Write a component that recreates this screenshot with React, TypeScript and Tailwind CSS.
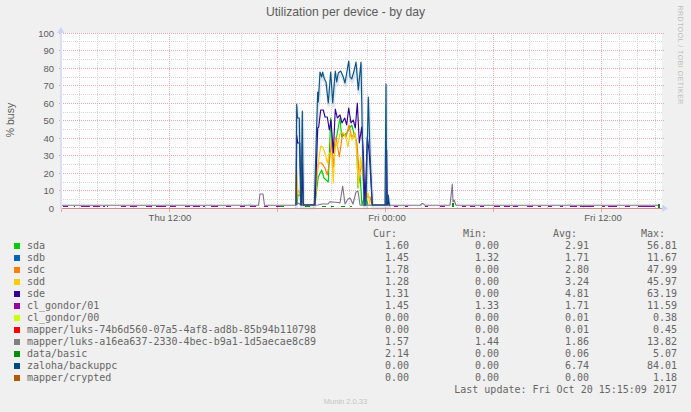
const mono = "font-['DejaVu_Sans_Mono',monospace]";

const rows: [string, string, string, string, string, string][] = [
  ["sda", "bg-[#00cc00]", "1.60", "0.00", "2.91", "56.81"],
  ["sdb", "bg-[#0066b3]", "1.45", "1.32", "1.71", "11.67"],
  ["sdc", "bg-[#ff8000]", "1.78", "0.00", "2.80", "47.99"],
  ["sdd", "bg-[#ffcc00]", "1.28", "0.00", "3.24", "45.97"],
  ["sde", "bg-[#330099]", "1.31", "0.00", "4.81", "63.19"],
  ["cl_gondor/01", "bg-[#990099]", "1.45", "1.33", "1.71", "11.59"],
  ["cl_gondor/00", "bg-[#ccff00]", "0.00", "0.00", "0.01", "0.38"],
  ["mapper/luks-74b6d560-07a5-4af8-ad8b-85b94b110798", "bg-[#ff0000]", "0.00", "0.00", "0.01", "0.45"],
  ["mapper/luks-a16ea637-2330-4bec-b9a1-1d5aecae8c89", "bg-[#808080]", "1.57", "1.44", "1.86", "13.82"],
  ["data/basic", "bg-[#008f00]", "2.14", "0.00", "0.06", "5.07"],
  ["zaloha/backuppc", "bg-[#00487d]", "0.00", "0.00", "6.74", "84.01"],
  ["mapper/crypted", "bg-[#b35a00]", "0.00", "0.00", "0.00", "1.18"],
];

const majorY = [33, 50, 68, 85, 103, 120, 138, 155, 173, 190];
const minorY = [41, 59, 77, 94, 112, 129, 147, 164, 182, 199];
const labelsY: [string, number][] = [
  ["100", 33], ["90", 50], ["80", 68], ["70", 85], ["60", 103], ["50", 120],
  ["40", 138], ["30", 155], ["20", 173], ["10", 190], ["0", 208],
];
const majorX = [61, 169, 277, 385, 493, 601];
const minorX = Array.from({ length: 34 }, (_, i) => 61 + i * 18).filter((x) => !majorX.includes(x));

const zaloha = "296,205 296.7,104 297.5,118 299.3,118 300.7,205 301,205 302.3,111 303.3,205 314.3,205 317.7,92 318.3,102 320,72 321.7,77 322.7,72 324,78 326,82 328.3,103 330.7,72 332.7,103 335.3,71 336.7,82 338.3,73 340.7,71 343.3,77 345,83 346.7,73 348.7,61 350,77 351.7,79 354,71 356,62 358.3,90 361,62 362.7,153 364,205 366,205 368.3,97 370,153 372.3,205 385,205 386,84 386.7,205 388.3,195 389.3,206";
const sde = "296,205 296.7,135 297.7,143 299.7,143 300.7,187 301.5,205 302.3,163 303.3,205 315,205 317.7,128 318.7,127 320.7,110 323.3,110 325,117 327.3,117 329.3,130 331,120 333.3,153 335.3,109 337.3,118 340,115 342,123 344.7,118 346.7,125 348.7,108 351,123 353.3,120 355.3,128 357.3,103 359.3,143 361.7,127 363.3,153 365,205 367.3,137 369.3,153 372.3,205 386,205 386.7,150 387.3,205 388.3,200 389.3,206";
const sdd = "296,205 296.7,170 298,193 300.7,193 303,205 315,205 316.7,180 318.3,163 320.7,146 322.7,147 325,153 327.3,163 329.3,153 331.7,153 333.3,183 335.3,140 337.3,147 340,133 343.3,133 346,138 348,147 350,133 352,140 355,133 356.7,153 358.3,187 360.7,157 363.3,180 365.7,200 368,193 370,205 386,205 386.7,195 388,205";
const sdc = "296.5,205 297.5,190 300,193 303,205 315,205 316,187 318.3,163 321.7,163 325,168 327.3,175 329.3,163 331.7,140 333.3,167 336,137 339.3,157 342.7,133 346,137 349,125 351.7,137 355,133 357.3,147 359.3,177 361.7,163 365,190 367.3,197 370,197 372,205";
const sda = "297,205 298,195 300,195 302,205 315,205 316,195 318.3,177 321.7,170 324,178 328.3,182 330.7,118 332.7,153 336,140 340,118 341.7,137 346.7,133 351.7,125 356.7,143 358,188 360,175 362,205 365,195 368,205";
const bumps = "61,205.2 258.5,205.2 260,194 263,194 264.5,205.2 296,205.2 298,203 301,205 314,205.2 318,205 322,204 328,204 330,201.7 333,202 338,202.5 340,203 342.7,186 345,204 348,199 350,198 353,204 356,192 358,191 360,205 363,205.2 420,205.2 422.7,203.3 425,205.2 450,205.2 452.3,184 453,202 454,200 456,205.2 660,205.2";
const shade = "258.5,205 260,194 263,194 264.5,205 Z M340,205 342.7,186 345,205 Z M346,205 349,198 352,205 Z M354,205 357,191 360,205 Z M450,205 452.3,184 456,205 Z";
const dashes: [number, number][] = [
  [63, 68], [74, 75], [81, 90], [93, 100], [103, 105], [107, 108], [121, 126], [130, 137], [146, 152],
  [156, 166], [170, 176], [185, 190], [193, 200], [203, 205], [211, 218], [226, 231], [240, 245], [250, 256],
  [264, 268], [276, 280], [394, 398], [405, 408], [425, 428], [440, 445], [462, 466], [470, 475], [480, 484],
  [494, 500], [504, 510], [513, 518], [527, 533], [538, 541], [548, 552], [560, 563], [570, 577], [580, 594],
  [602, 605], [608, 617], [625, 630], [638, 655],
];
const greens: [number, number][] = [[280, 284], [305, 310], [322, 326], [331, 334], [341, 345], [350, 352]];

function Chart() {
  return (
    <svg viewBox="0 24 691 204" className="block w-[691px] h-[204px] overflow-visible" fontFamily="'Liberation Sans',sans-serif">
      <rect x="61" y="33" width="601" height="175" fill="#ffffff" />
      <g shapeRendering="crispEdges" strokeWidth="1" strokeDasharray="1 1">
        {minorX.map((x) => <line key={x} x1={x + 0.5} x2={x + 0.5} y1="33" y2="208" stroke="#d4d4d4" />)}
        {minorY.map((y) => <line key={y} x1="61" x2="662" y1={y + 0.5} y2={y + 0.5} stroke="#d4d4d4" />)}
        {majorX.slice(1).map((x) => <line key={x} x1={x + 0.5} x2={x + 0.5} y1="33" y2="208" stroke="#ecabab" />)}
        {majorY.map((y) => <line key={y} x1="61" x2="664" y1={y + 0.5} y2={y + 0.5} stroke="#ecabab" />)}
      </g>
      <g shapeRendering="crispEdges" stroke="#b9b9c9" strokeWidth="1">
        {majorY.map((y) => <line key={y} x1="59" x2="61" y1={y + 0.5} y2={y + 0.5} />)}
        {minorY.map((y) => <line key={y} x1="60" x2="61" y1={y + 0.5} y2={y + 0.5} />)}
        {minorX.map((x) => <line key={x} x1={x + 0.5} x2={x + 0.5} y1="208" y2="209" />)}
      </g>
      <path d={shade} fill="#8a7a9a" opacity="0.55" />
      <g fill="none" strokeLinejoin="round" strokeWidth="1.15">
        <polyline points={zaloha} stroke="#8fb4d0" strokeWidth="3" opacity="0.3" transform="translate(0.5 3)" />
        <polyline points={sda} stroke="#00cc00" />
        <polyline points={sdc} stroke="#ff8000" />
        <polyline points={sdd} stroke="#ffcc00" />
        <polyline points={sde} stroke="#330099" />
      </g>
      <g shapeRendering="crispEdges">
        {dashes.map(([a, b]) => <rect key={a} x={a} y="206" width={b - a} height="1" fill="#990099" />)}
        {greens.map(([a, b]) => <rect key={a} x={a} y="206" width={b - a} height="1" fill="#008f00" />)}
      </g>
      <g fill="none" strokeLinejoin="round" strokeWidth="1.15">
        <polyline points={bumps} stroke="#7f6f8a" strokeWidth="1.1" />
        <polyline points={zaloha} stroke="#0c5283" />
      </g>
      <g shapeRendering="crispEdges">
        <rect x="452" y="203" width="2" height="4" fill="#008f00" />
        <rect x="658" y="204" width="2" height="4" fill="#2f6f2f" />
        <rect x="61" y="208" width="601" height="1" fill="#c98f86" />
        <rect x="60" y="33" width="2" height="176" fill="#dcdcf6" />
        <rect x="662" y="208" width="2" height="1" fill="#dcdcf6" />
        {majorX.map((x) => <rect key={x} x={x} y="209" width="1" height="3" fill="#e8a3a3" />)}
      </g>
      <polygon points="57,33 64.5,33 61,27" fill="#ccd4fb" />
      <polygon points="662,204.5 662,212 668,208.5" fill="#ccd4fb" />
      <g fontSize="9.5" fill="#5c5c5c" textAnchor="end">
        {labelsY.map(([t, y]) => <text key={t} x="54" y={y + 3.5}>{t}</text>)}
      </g>
      <g fontSize="9.5" fill="#5c5c5c" textAnchor="middle">
        <text x="170" y="221">Thu 12:00</text>
        <text x="387" y="221">Fri 00:00</text>
        <text x="603" y="221">Fri 12:00</text>
      </g>
      <text transform="translate(14 120) rotate(-90)" fontSize="10.5" fill="#5c5c5c" textAnchor="middle">% busy</text>
      <text transform="translate(678 5.5) rotate(90)" fontSize="7" fill="#bdbdbd" letterSpacing="0.5">RRDTOOL / TOBI OETIKER</text>
    </svg>
  );
}

export default function App() {
  return (
    <div className="w-[691px] h-[412px] bg-[#f0f0f0] overflow-hidden flex flex-col">
      <div className="h-[24px] text-center text-[12.2px] leading-[24px] text-[#5c5c5c] font-['Liberation_Sans',sans-serif]">
        Utilization per device - by day
      </div>
      <Chart />
      <div className={`grid grid-cols-[13px_322px_60px_90px_90px_88px] pl-[14px] text-[10px] leading-[12px] text-[#666] whitespace-pre ${mono}`}>
        <div className="col-start-3 text-right pr-[12px]">Cur:</div>
        <div className="text-right pr-[12px]">Min:</div>
        <div className="text-right pr-[12px]">Avg:</div>
        <div className="text-right pr-[12px]">Max:</div>
        {rows.map(([name, color, cur, min, avg, max]) => (
          <div key={name} className="contents">
            <div className="flex items-center h-[12px]"><span className={`block w-[6px] h-[6px] ${color}`} /></div>
            <div>{name}</div>
            <div className="text-right">{cur}</div>
            <div className="text-right">{min}</div>
            <div className="text-right">{avg}</div>
            <div className="text-right">{max}</div>
          </div>
        ))}
        <div className="col-span-6 text-right">Last update: Fri Oct 20 15:15:09 2017</div>
      </div>
      <div className="mt-[1px] text-center text-[7.5px] leading-[9px] text-[#c4c4c4] font-['Liberation_Sans',sans-serif]">Munin 2.0.33</div>
    </div>
  );
}
